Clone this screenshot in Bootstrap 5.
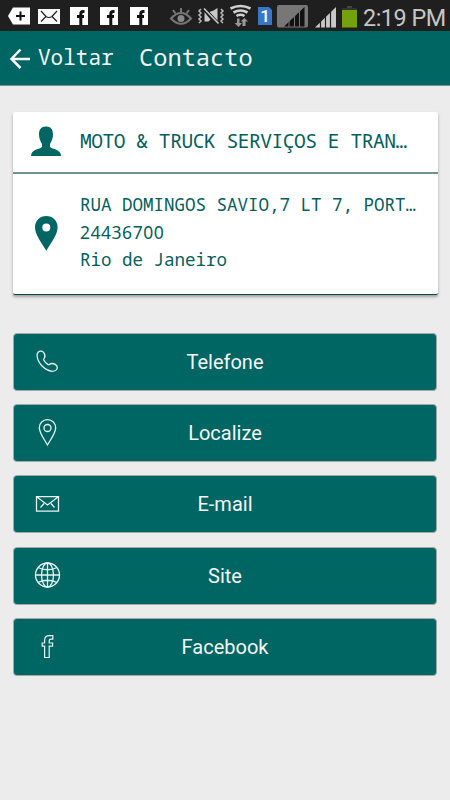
<!DOCTYPE html>
<html lang="pt">
<head>
<meta charset="utf-8">
<meta name="viewport" content="width=device-width, initial-scale=1">
<title>Contacto</title>
<link href="https://cdn.jsdelivr.net/npm/bootstrap@5.3.0/dist/css/bootstrap.min.css" rel="stylesheet">
<style>
:root{--teal:#006663;--ink:#045f5c}
body{background:#ececec;width:450px;height:800px;overflow:hidden;font-family:Roboto,sans-serif}
svg{display:block;flex:none}
.status{height:31px;background:#1f1f1f;color:#c6c6c6}
.clock{font-size:23.4px;line-height:31px;padding:3px 0 0 3px;white-space:nowrap;letter-spacing:-.5px}
.mono{font-family:"Droid Sans Mono","Noto Sans Mono","DejaVu Sans Mono",monospace;white-space:pre}
.topbar{height:55px;background:var(--teal);color:#f4f4f4;border-bottom:1px solid #73908f}
.back{font-size:21px;width:101px}
.heading{font-size:23.7px}
.info{margin:26px 12px 0 13px;border-radius:2px;box-shadow:0 2px 3px rgba(0,0,0,.32);color:var(--ink);border-bottom:1px solid #004a49;height:183px}
.who{height:62px;border-bottom:2px solid #6f918f}
.pic{width:67px}
.name{font-size:19.6px;letter-spacing:-.49px;padding-bottom:3px}
.addr{font-size:17.5px;line-height:27.4px;padding-bottom:2px}
.zip{font-family:"Noto Sans",sans-serif;letter-spacing:.52px}
.actions{margin:38px 13px 0 13px;gap:13.2px}
.act{height:58px;padding:0;background:var(--teal)!important;border:1px solid #a3a7a7!important;border-radius:4px;color:#f5f5f5!important;font-size:20px}
.glyph{width:70px}
.cap{margin-right:70px}
</style>
<script src="https://cdn.jsdelivr.net/npm/bootstrap@5.3.0/dist/js/bootstrap.bundle.min.js"></script>
</head>
<body>
<div class="status d-flex overflow-hidden">
  <svg width="360" height="31" viewBox="0 0 360 31">
    <path d="M8 16l5-8.500h17v17H13z" fill="#fff"/><path d="M16 16h9M20.500 11.500v9" stroke="#111" stroke-width="2"/>
    <path d="M38 9h22v15H38z" fill="#f8f8f8"/><path d="M41 11l5 5.500q3 2 6 0l5-5.500M41 21.500l5-5M57 21.500l-5-5" fill="none" stroke="#222" stroke-width="1.200"/>
    <g id="fb"><path d="M70 7h18v18H70z" fill="#fff"/><path d="M84.500 11.500h-1.300q-2.400 0-2.400 2.500V25M77 16.500h7" fill="none" stroke="#111" stroke-width="3"/></g>
    <use href="#fb" x="30"/><use href="#fb" x="60"/>
    <g fill="none" stroke="#777" stroke-width="2"><path d="M171 18.500q10-11 20 0-10 10.500-20 0z"/><path d="M181 8v4M173 10l2.500 3.500M189 10l-2.500 3.500"/></g><circle cx="181" cy="18.500" r="3.500" fill="#888"/>
    <path d="M204.500 12v9.500h4l2-2zM209.500 12l8 9.500V8l-4 2.500z" fill="#c8c8c8"/><path d="M204 9l14 14.500" stroke="#1f1f1f" stroke-width="3.500"/><path d="M204 8.500l14.500 15" stroke="#c8c8c8" stroke-width="1.600"/>
    <path d="M201 9l-2 2 2 2-2 2 2 2-2 2 2 2-2 2M221 9l2 2-2 2 2 2-2 2 2 2-2 2 2 2" fill="none" stroke="#bbb" stroke-width="1.500"/>
    <g fill="none" stroke="#d0d0d0" stroke-width="2.600"><path d="M230.500 8.500q10-5 20 0M233.500 12.500q7-4 14 0M236.500 16q4-2.500 8 0"/></g>
    <path d="M237 18.500v4.500h-2.500l4 4 3.500-4h-2.500v-4.500zM242.500 26v-4.500H240.500l4-3.500 3.500 3.500H245.500V26z" fill="#999"/>
    <path d="M258 7h11l3 3v15h-14z" fill="#3677c9"/><text x="265" y="22" text-anchor="middle" font-family="Roboto" font-size="17" font-weight="500" fill="#fff">1</text>
    <rect x="277" y="5" width="31" height="22.500" rx="2" fill="#777"/><path d="M284 26.500L304.500 7v19.500z" fill="#111"/><path d="M289 20v7M294.500 15v12M299.500 10v17" stroke="#777" stroke-width="1"/>
    <path d="M315 27.500L336 7v20.500z" fill="#c8c8c8"/><path d="M320.500 17v11M325.500 12v16M330.500 7v21" stroke="#1f1f1f" stroke-width="1.200"/>
    <path d="M347 6h5v2h-5z" fill="#444"/><path d="M342 8h15v2h-15z" fill="#333"/><path d="M342 10h15v17.500h-15z" fill="#74a20c"/>
  </svg>
  <span class="clock">2:19 PM</span>
</div>
<header class="topbar d-flex align-items-center">
  <svg width="38" height="54" viewBox="0 31.500 38 54"><path d="M30 59.500H12M20.500 50l-9 9.500 9 9" fill="none" stroke="#f7f7f7" stroke-width="2.500"/></svg>
  <span class="mono back">Voltar</span><span class="mono heading">Contacto</span>
</header>
<main>
  <section class="info bg-white">
    <div class="who d-flex align-items-center">
      <div class="pic"><svg width="67" height="60" viewBox="13 112 67 60"><path d="M46 126.500c5 0 7 3 7 8 0 4-1.500 7-3 9.500v3c2 2.500 11 2 11 9H31c0-7 9-6.500 11-9v-3c-1.500-2.500-3-5.500-3-9.500 0-5 2-8 7-8z" fill="#006663"/></svg></div>
      <span class="mono name">MOTO &amp; TRUCK SERVIÇOS E TRAN…</span>
    </div>
    <div class="d-flex align-items-center h-auto">
      <div class="pic"><svg width="67" height="119" viewBox="13 174 67 119"><path fill-rule="evenodd" d="M46.300 216c6.500 0 11.300 4.700 11.300 11.200 0 6.800-5.500 14-11.300 23.600C40.500 241.200 35 234 35 227.200 35 220.700 39.800 216 46.300 216zm0 7.400a4 4 0 100 8 4 4 0 000-8z" fill="#006663"/></svg></div>
      <div class="mono addr"><div>RUA DOMINGOS SAVIO,7 LT 7, PORT…</div><div class="zip">24436700</div><div>Rio de Janeiro</div></div>
    </div>
  </section>
  <nav class="actions d-flex flex-column">
    <button class="btn act d-flex align-items-center"><span class="glyph"><svg width="70" height="56" viewBox="14 334 70 56"><path d="M38.300 352c1.700-1.400 4.200-1.200 5.400.6 1 1.500 1.800 3.400.9 4.900-.7 1.100-1.200 1.600-.8 2.500 1 1.900 2.300 3.300 4 4.400 1.200.7 2-.3 3-.7 2.700-.8 6.700 1.300 6.500 4-.2 2.200-2.600 3.600-5 3.600-7.600-.8-14.500-8.200-15.200-15.300-.2-1.700.2-3.100 1.200-4z" fill="none" stroke="#e8f4f2" stroke-width="1.300"/></svg></span><span class="cap flex-fill">Telefone</span></button>
    <button class="btn act d-flex align-items-center"><span class="glyph"><svg width="70" height="56" viewBox="14 405 70 56"><g fill="none" stroke="#e8f4f2" stroke-width="1.300"><path d="M47.500 419.700c4.700 0 8.200 3.500 8.200 8 0 5-4 10-8.200 17.300-4.200-7.300-8.200-12.300-8.200-17.300 0-4.500 3.500-8 8.200-8z"/><circle cx="47.500" cy="428" r="3.500"/></g></svg></span><span class="cap flex-fill">Localize</span></button>
    <button class="btn act d-flex align-items-center"><span class="glyph"><svg width="70" height="56" viewBox="14 476 70 56"><path d="M36.500 496.600h22v14.600h-22zM37 497l10.500 8 10.500-8M40.500 507.500l3.500-4M54.500 507.500l-3.500-4" fill="none" stroke="#e8f4f2" stroke-width="1.300"/></svg></span><span class="cap flex-fill">E-mail</span></button>
    <button class="btn act d-flex align-items-center"><span class="glyph"><svg width="70" height="56" viewBox="14 548 70 56"><g fill="none" stroke="#e8f4f2" stroke-width="1.300"><circle cx="47.500" cy="575" r="12"/><ellipse cx="47.500" cy="575" rx="6" ry="12"/><path d="M47.500 563v24M35.500 575h24M38 567.500q9.500 4.500 19 0M38 582.500q9.500-4.500 19 0"/></g></svg></span><span class="cap flex-fill">Site</span></button>
    <button class="btn act d-flex align-items-center"><span class="glyph"><svg width="70" height="56" viewBox="14 619 70 56"><path d="M52.800 635.700h-3.200c-3.300 0-5 1.900-5 4.800v2.500h-2.400v3.200h2.400v11.300h4.600v-11.300h3.400V643h-3.400v-2.200c0-1.100.5-1.700 1.700-1.700h1.900z" fill="none" stroke="#e8f4f2" stroke-width="1.200"/></svg></span><span class="cap flex-fill">Facebook</span></button>
  </nav>
</main>
</body>
</html>
